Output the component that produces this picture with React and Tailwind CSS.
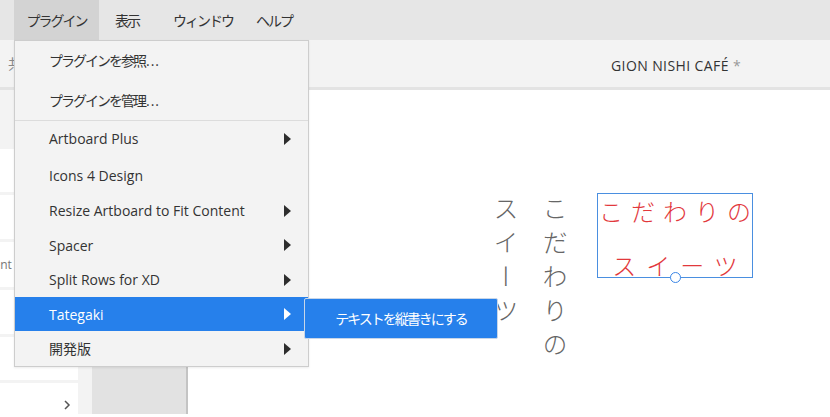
import React from "react";

const Arrow = ({ white }) => (
  <svg width="9" height="14" viewBox="0 0 9 14" className="shrink-0">
    <polygon points="1,1 8,7 1,13" fill={white ? "#ffffff" : "#2d2d2d"} />
  </svg>
);

const items = [
  { label: "Artboard Plus", h: "h-[36px]", arrow: true },
  { label: "Icons 4 Design", h: "h-[37px]", arrow: false },
  { label: "Resize Artboard to Fit Content", h: "h-[35px]", arrow: true },
  { label: "Spacer", h: "h-[34px]", arrow: true },
  { label: "Split Rows for XD", h: "h-[35px]", arrow: true },
  { label: "Tategaki", h: "h-[34px]", arrow: true, active: true },
  { label: "開発版", h: "h-[35px]", arrow: true, jp: true },
];

export default function App() {
  const ui = { fontFamily: '"Open Sans", "Noto Sans CJK JP", sans-serif' };
  const jp = { fontFamily: '"Noto Sans CJK JP", sans-serif', letterSpacing: "-2px" };
  const jpn = { fontFamily: '"Noto Sans CJK JP", sans-serif' };
  const serif = { fontFamily: '"Noto Sans CJK JP", serif', fontWeight: 300 };
  const dots = (
    <span className="ml-[1px]" style={{ letterSpacing: "1px", fontFamily: '"Open Sans", sans-serif' }}>
      ...
    </span>
  );
  return (
    <div className="relative w-[830px] h-[417px] overflow-hidden bg-white text-[#333]" style={ui}>
      {/* menu bar */}
      <div className="flex h-[40px] bg-[#e6e6e6] text-[14px] text-[#333]" style={jp}>
        <div className="w-[14px]" />
        <div className="flex items-center justify-center w-[85px] bg-[#d3d3d3]">プラグイン</div>
        <div className="flex items-center pl-[16px] w-[74px]">表示</div>
        <div className="flex items-center w-[83px]">ウィンドウ</div>
        <div className="flex items-center">ヘルプ</div>
      </div>
      {/* toolbar */}
      <div className="relative flex items-center h-[50px] bg-[#f3f3f3] border-b-[3px] border-[#e3e3e3]">
        <div className="pl-[8px] text-[14px] text-[#888]" style={jp}>共有</div>
        <div className="absolute left-[611px] top-[15px] text-[14px] text-[#333] tracking-[0.4px]">
          GION NISHI CAFÉ <span className="text-[#999]">*</span>
        </div>
      </div>
      {/* body */}
      <div className="flex h-[324px]">
        <div className="flex flex-col w-[78px] bg-[#f3f3f3] gap-[3px]">
          <div className="h-[56px] bg-[#f3f3f3]" />
          <div className="h-[43px] bg-white" />
          <div className="h-[44px] bg-white" />
          <div className="h-[45px] bg-white flex items-center overflow-hidden">
            <span className="text-[12px] text-[#777] -ml-[33px]">Content</span>
          </div>
          <div className="h-[44px] bg-white" />
          <div className="h-[43px] bg-white" />
          <div className="flex-1 bg-white flex items-end justify-end pr-[6px] pb-[2px]">
            <svg width="10" height="14" viewBox="0 0 10 14">
              <polyline points="3,3 7,7 3,11" fill="none" stroke="#555" strokeWidth="1.5" />
            </svg>
          </div>
        </div>
        <div className="w-[14px] bg-[#f3f3f3]" />
        <div className="w-[96px] bg-[#e2e2e2] border-r-[2px] border-[#c4c4c4]" />
        <div className="relative flex-1 bg-white">
          {/* vertical texts */}
          <div
            className="absolute left-[354px] top-[106px] text-[25px] text-[#666] tracking-[9px] leading-none"
            style={{ writingMode: "vertical-rl", ...serif }}
          >
            こだわりの
          </div>
          <div
            className="absolute left-[305px] top-[106px] text-[25px] text-[#666] tracking-[9px] leading-none"
            style={{ writingMode: "vertical-rl", ...serif }}
          >
            スイーツ
          </div>
          {/* selected text box */}
          <div className="absolute left-[409px] top-[103px] w-[156px] h-[85px] border border-[#4a8fe0] flex flex-col items-center">
            <div className="whitespace-nowrap text-[24px] text-[#e2383c] leading-none tracking-[8px] pl-[8px] mt-[5px]" style={serif}>
              こだわりの
            </div>
            <div className="whitespace-nowrap text-[24px] text-[#e2383c] leading-none tracking-[10px] pl-[10px] mt-[30px]" style={serif}>
              スイーツ
            </div>
            <div className="absolute left-[72px] top-[78px] w-[11px] h-[11px] rounded-full bg-white border-[1.5px] border-[#3b86e6]" />
          </div>
        </div>
      </div>

      {/* dropdown menu */}
      <div className="absolute left-[14px] top-[40px] w-[295px] h-[327px] bg-[#f3f3f3] border border-[#cdcdcd] shadow-[0_1px_2px_rgba(0,0,0,0.08)] flex flex-col text-[14px] text-[#333]">
        <div className="h-[40px] flex items-center pl-[34px]" style={jp}>プラグインを参照{dots}</div>
        <div className="h-[40px] flex items-center pl-[34px] border-b border-[#dcdcdc]" style={jp}>プラグインを管理{dots}</div>
        {items.map((it) => (
          <div
            key={it.label}
            className={`${it.h} flex items-center justify-between pl-[34px] pr-[16px] ${it.active ? "bg-[#2680eb] text-white" : ""}`}
          >
            <span style={it.jp ? jpn : undefined}>{it.label}</span>
            {it.arrow && <Arrow white={it.active} />}
          </div>
        ))}
      </div>

      {/* submenu */}
      <div className="absolute left-[304px] top-[298px] w-[194px] h-[41px] bg-[#2680eb] border border-[#c8d6e8] rounded-[2px] flex items-center justify-center text-white text-[14px]" style={jp}>
        テキストを縦書きにする
      </div>
    </div>
  );
}
